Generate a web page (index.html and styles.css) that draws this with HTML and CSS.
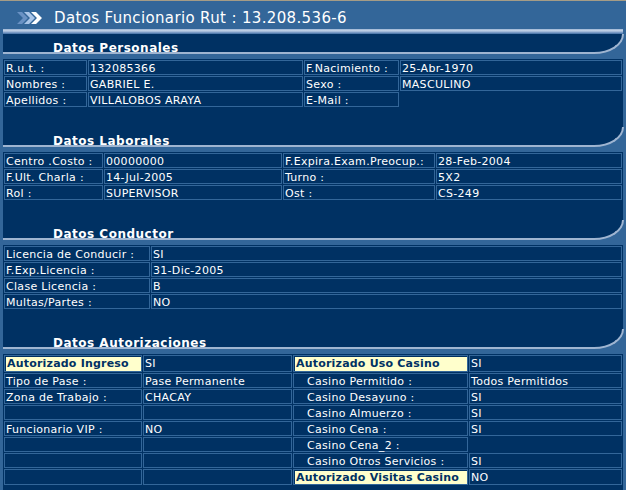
FILE: index.html
```html
<!DOCTYPE html>
<html lang="es">
<head>
<meta charset="utf-8">
<title>Datos Funcionario</title>
<link rel="stylesheet" href="styles.css">
</head>
<body>
<div class="page">
  <div class="titlebar">
    <svg class="chev" width="26" height="12" viewBox="0 0 26 12">
      <polygon points="0,0 5,0 11,6 5,12 0,12 6,6" fill="#6a92c4"/>
      <polygon points="7,0 12,0 18,6 12,12 7,12 13,6" fill="#a9c5e8"/>
      <polygon points="14,0 19,0 25,6 19,12 14,12 20,6" fill="#ffffff"/>
    </svg>
    <span class="title">Datos Funcionario Rut : 13.208.536-6</span>
  </div>
  <div class="panel">
    <div class="topline"></div>

    <section class="sec">
      <div class="sec-head"><span>Datos Personales</span></div>
      <div class="sec-gap"></div>
      <div class="grid g1">
        <div class="c">R.u.t. :</div><div class="c">132085366</div><div class="c">F.Nacimiento :</div><div class="c">25-Abr-1970</div>
        <div class="c">Nombres :</div><div class="c">GABRIEL E.</div><div class="c">Sexo :</div><div class="c">MASCULINO</div>
        <div class="c">Apellidos :</div><div class="c">VILLALOBOS ARAYA</div><div class="c">E-Mail :</div><div class="e"></div>
      </div>
      <div class="spacer"></div>
    </section>

    <section class="sec">
      <div class="sec-head"><span>Datos Laborales</span></div>
      <div class="sec-gap"></div>
      <div class="grid g2">
        <div class="c">Centro .Costo :</div><div class="c">00000000</div><div class="c">F.Expira.Exam.Preocup.:</div><div class="c">28-Feb-2004</div>
        <div class="c">F.Ult. Charla :</div><div class="c">14-Jul-2005</div><div class="c">Turno :</div><div class="c">5X2</div>
        <div class="c">Rol :</div><div class="c">SUPERVISOR</div><div class="c">Ost :</div><div class="c">CS-249</div>
      </div>
      <div class="spacer"></div>
    </section>

    <section class="sec">
      <div class="sec-head"><span>Datos Conductor</span></div>
      <div class="sec-gap"></div>
      <div class="grid g3">
        <div class="c">Licencia de Conducir :</div><div class="c">SI</div>
        <div class="c">F.Exp.Licencia :</div><div class="c">31-Dic-2005</div>
        <div class="c">Clase Licencia :</div><div class="c">B</div>
        <div class="c">Multas/Partes :</div><div class="c">NO</div>
      </div>
      <div class="spacer"></div>
    </section>

    <section class="sec">
      <div class="sec-head"><span>Datos Autorizaciones</span></div>
      <div class="sec-gap"></div>
      <div class="grid g4">
        <div class="c y"><span class="hl">Autorizado Ingreso</span></div><div class="c">SI</div><div class="c y"><span class="hl">Autorizado Uso Casino</span></div><div class="c">SI</div>
        <div class="c">Tipo de Pase :</div><div class="c">Pase Permanente</div><div class="c ind">Casino Permitido :</div><div class="c">Todos Permitidos</div>
        <div class="c">Zona de Trabajo :</div><div class="c">CHACAY</div><div class="c ind">Casino Desayuno :</div><div class="c">SI</div>
        <div class="c"></div><div class="c"></div><div class="c ind">Casino Almuerzo :</div><div class="c">SI</div>
        <div class="c">Funcionario VIP :</div><div class="c">NO</div><div class="c ind">Casino Cena :</div><div class="c">SI</div>
        <div class="c"></div><div class="c"></div><div class="c ind">Casino Cena_2 :</div><div class="e"></div>
        <div class="c"></div><div class="c"></div><div class="c ind">Casino Otros Servicios :</div><div class="c">SI</div>
        <div class="c"></div><div class="c"></div><div class="c y"><span class="hl">Autorizado Visitas Casino</span></div><div class="c">NO</div>
      </div>
      <div class="bottom"></div>
    </section>
  </div>
</div>
</body>
</html>
```

FILE: styles.css
```css
html, body {
  margin: 0;
  padding: 0;
  background: #336699;
}

body {
  font-family: "DejaVu Sans", Verdana, sans-serif;
  color: #ffffff;
}

.page {
  width: 626px;
  border-top: 1px solid #a59c86;
}

.titlebar {
  display: flex;
  align-items: flex-start;
  height: 19px;
  padding-top: 9px;
  background: #336699;
}

.chev {
  display: block;
  margin: 2px 11px 0 17px;
  flex: none;
}

.title {
  font-size: 15px;
  line-height: 17px;
  letter-spacing: 0.35px;
  white-space: nowrap;
}

.panel {
  margin: 0 3px;
  width: 620px;
}

.topline {
  height: 5px;
  background: linear-gradient(to bottom, #9cb4d4 0, #c2d2e6 35%, #8eaad0 60%, #3f6ea4 100%);
}

.sec-head {
  height: 13px;
  padding: 5px 0 0 50px;
  background: #003163;
  border-bottom: 2px solid #9fb5d1;
  border-right: 2px solid #9fb5d1;
  border-bottom-right-radius: 30px 20px;
  margin-right: -1px;
}

.sec-head span {
  display: block;
  font-size: 12px;
  font-weight: bold;
  line-height: 18px;
  letter-spacing: 0.5px;
  white-space: nowrap;
}

.sec-gap {
  height: 5px;
  background: #336699;
}

.spacer {
  height: 19px;
  background: #003163;
}

.bottom {
  height: 10px;
  background: #003163;
}

.grid {
  display: grid;
  gap: 1px;
  padding: 1px;
  background: #003163;
  grid-auto-rows: 15px;
}

.g1 { grid-template-columns: 83px 215px 95px 222px; }
.g2 { grid-template-columns: 99px 178px 152px 186px; }
.g3 { grid-template-columns: 146px 471px; }
.g4 {
  grid-template-columns: 138px 149px 175px 153px;
  grid-template-rows: 17px repeat(6, 15px) 16px;
}

.c {
  box-sizing: border-box;
  border: 1px solid #336699;
  padding: 1px 1px 0 1px;
  font-size: 11px;
  line-height: 13px;
  letter-spacing: 0.3px;
  white-space: nowrap;
  min-width: 0;
}

.e {
  box-sizing: border-box;
}

.ind {
  padding-left: 13px;
}

.y {
  padding: 1px 0 0 1px;
  display: flex;
  overflow: hidden;
}

.hl {
  flex: 1;
  background: #ffffcc;
  color: #003163;
  font-weight: bold;
  line-height: 14px;
  letter-spacing: 0.2px;
  padding-left: 1px;
}
```
